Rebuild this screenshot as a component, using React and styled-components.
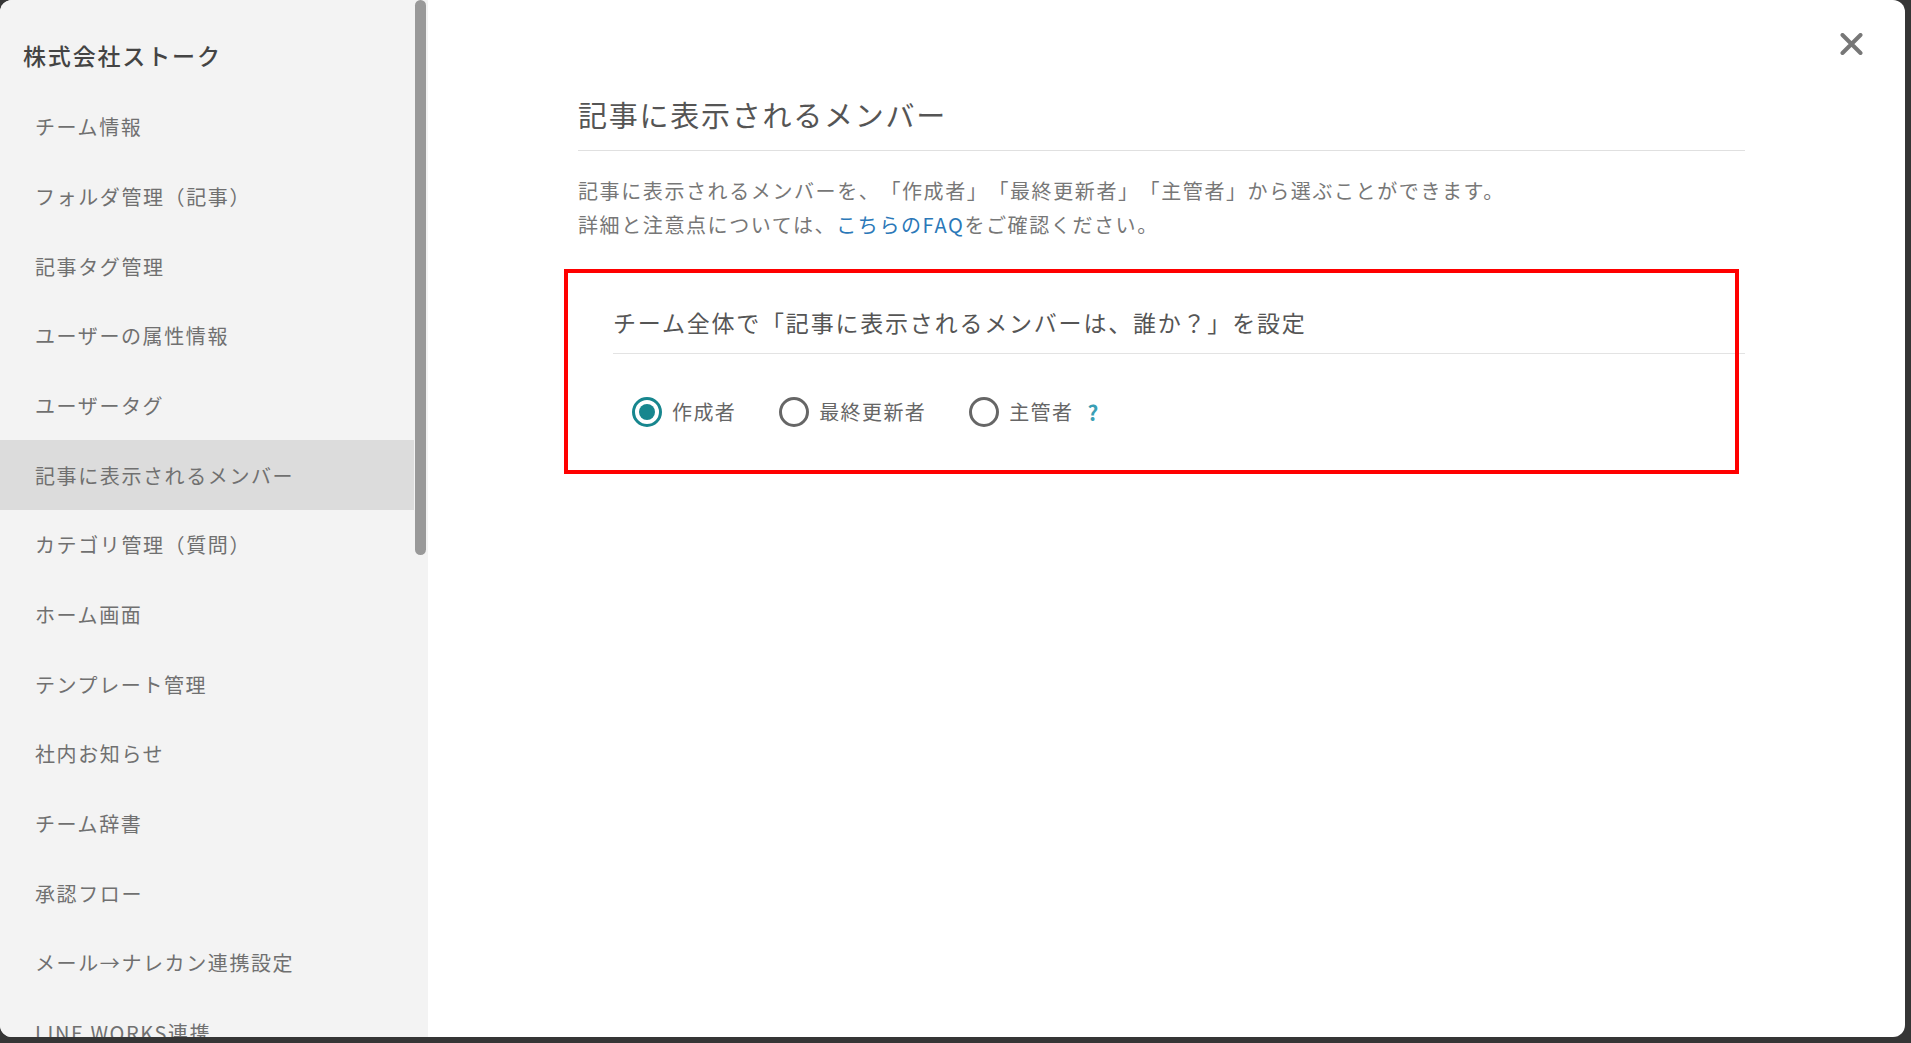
import React from 'react';
import styled, { createGlobalStyle } from 'styled-components';

const GlobalStyle = createGlobalStyle`
  html, body {
    margin: 0;
    padding: 0;
    background: #353535;
  }
  body {
    font-family: "Noto Sans CJK JP", "Noto Sans", sans-serif;
    text-spacing-trim: space-all;
  }
  * { box-sizing: border-box; }
`;

const menuItems = [
  'チーム情報',
  'フォルダ管理（記事）',
  '記事タグ管理',
  'ユーザーの属性情報',
  'ユーザータグ',
  '記事に表示されるメンバー',
  'カテゴリ管理（質問）',
  'ホーム画面',
  'テンプレート管理',
  '社内お知らせ',
  'チーム辞書',
  '承認フロー',
  'メール→ナレカン連携設定',
  'LINE WORKS連携',
  'Slack連携',
];

const options = [
  { label: '作成者', checked: true },
  { label: '最終更新者', checked: false },
  { label: '主管者', checked: false, help: true },
];

const App = () => {
  return (
    <Page>
      <GlobalStyle />
      <Modal>
        <Sidebar>
          <CompanyName>株式会社ストーク</CompanyName>
          <MenuList>
            {menuItems.map((item) => (
              <MenuItem key={item} $active={item === '記事に表示されるメンバー'}>
                {item}
              </MenuItem>
            ))}
          </MenuList>
          <ScrollThumb />
        </Sidebar>

        <Main>
          <CloseBtn aria-label="close">
            <svg width="23" height="22" viewBox="0 0 23 22">
              <path d="M2.5 2 L20.5 20 M20.5 2 L2.5 20" stroke="#777" strokeWidth="4" strokeLinecap="round" />
            </svg>
          </CloseBtn>

          <Title>記事に表示されるメンバー</Title>
          <Description>
            記事に表示されるメンバーを、「作成者」「最終更新者」「主管者」から選ぶことができます。
            <br />
            詳細と注意点については、<FaqLink href="#">こちらのFAQ</FaqLink>をご確認ください。
          </Description>

          <Section>
            <SectionHeading>チーム全体で「記事に表示されるメンバーは、誰か？」を設定</SectionHeading>
            <RadioRow>
              {options.map((opt) => (
                <RadioOption key={opt.label}>
                  <RadioCircle $checked={opt.checked}>
                    {opt.checked && <RadioDot />}
                  </RadioCircle>
                  <RadioLabel>{opt.label}</RadioLabel>
                  {opt.help && <HelpMark>?</HelpMark>}
                </RadioOption>
              ))}
            </RadioRow>
          </Section>
        </Main>
      </Modal>
    </Page>
  );
};

const Page = styled.div`
  width: 1911px;
  height: 1043px;
  background: #353535;
  overflow: hidden;
`;

const Modal = styled.div`
  width: 1905px;
  height: 1037px;
  display: flex;
  background: #fff;
  border-radius: 12px;
  overflow: hidden;
`;

const Sidebar = styled.aside`
  position: relative;
  width: 428px;
  flex-shrink: 0;
  height: 100%;
  background: #f3f3f3;
  overflow: hidden;
`;

const CompanyName = styled.div`
  padding: 40px 0 22px 23px;
  font-size: 23px;
  line-height: 30px;
  letter-spacing: 0.08em;
  font-weight: 500;
  color: #444;
`;

const MenuList = styled.nav`
  width: 414px;
  display: flex;
  flex-direction: column;
`;

const MenuItem = styled.div`
  height: 69.66px;
  display: flex;
  align-items: center;
  padding-left: 35px;
  font-size: 20px;
  letter-spacing: 0.08em;
  color: #707070;
  background: ${(p) => (p.$active ? '#dcdcdc' : 'transparent')};
  white-space: nowrap;
`;

const ScrollThumb = styled.div`
  position: absolute;
  top: 0;
  right: 2px;
  width: 11px;
  height: 555px;
  border-radius: 6px;
  background: #999;
`;

const Main = styled.main`
  position: relative;
  flex: 1;
  padding: 0 160px 0 150px;
`;

const CloseBtn = styled.button`
  position: absolute;
  top: 33px;
  right: 42px;
  width: 23px;
  height: 22px;
  padding: 0;
  border: none;
  background: none;
  display: flex;
  cursor: pointer;
`;

const Title = styled.h1`
  margin: 0;
  padding: 94px 0 16px;
  font-size: 29px;
  line-height: 40px;
  font-weight: 400;
  letter-spacing: 0.06em;
  color: #555;
  border-bottom: 1px solid #e0e0e0;
`;

const Description = styled.p`
  margin: 23px 0 0;
  font-size: 20px;
  line-height: 34px;
  letter-spacing: 0.08em;
  color: #777;
`;

const FaqLink = styled.a`
  color: #2b78b8;
  text-decoration: none;
`;

const Section = styled.section`
  position: relative;
  margin-top: 27px;
  padding: 36px 0 47px 35px;

  &::after {
    content: '';
    position: absolute;
    top: 0;
    bottom: 0;
    left: -14px;
    right: 6px;
    border: 4px solid #ff0000;
    pointer-events: none;
  }
`;

const SectionHeading = styled.h2`
  margin: 0;
  padding-bottom: 14px;
  font-size: 23px;
  line-height: 34px;
  font-weight: 400;
  letter-spacing: 0.078em;
  color: #555;
  border-bottom: 1px solid #e3e3e3;
`;

const RadioRow = styled.div`
  margin-top: 43px;
  padding-left: 19px;
  display: flex;
  align-items: center;
  gap: 43px;
`;

const RadioOption = styled.label`
  display: flex;
  align-items: center;
  gap: 10px;
  cursor: pointer;
`;

const RadioCircle = styled.span`
  width: 30px;
  height: 30px;
  border-radius: 50%;
  border: 3px solid ${(p) => (p.$checked ? '#17868e' : '#666')};
  display: grid;
  place-items: center;
`;

const RadioDot = styled.span`
  width: 16px;
  height: 16px;
  border-radius: 50%;
  background: #17868e;
`;

const RadioLabel = styled.span`
  font-size: 20px;
  line-height: 30px;
  letter-spacing: 0.07em;
  color: #666;
`;

const HelpMark = styled.span`
  margin-left: 4px;
  font-size: 21px;
  line-height: 30px;
  font-weight: 700;
  color: #3a9fb5;
`;

export default App;
